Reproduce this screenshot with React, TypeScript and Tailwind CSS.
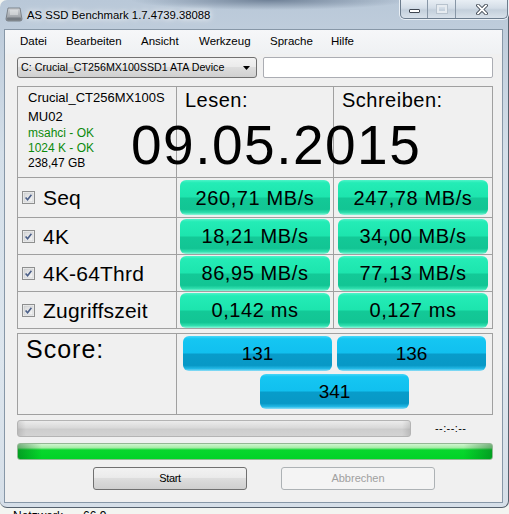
import React from "react";

type Row = {
  label: string;
  read: string;
  write: string;
  h: string;
};

const rows: Row[] = [
  { label: "Seq", read: "260,71 MB/s", write: "247,78 MB/s", h: "h-[40px]" },
  { label: "4K", read: "18,21 MB/s", write: "34,00 MB/s", h: "h-[37px]" },
  { label: "4K-64Thrd", read: "86,95 MB/s", write: "77,13 MB/s", h: "h-[37px]" },
  { label: "Zugriffszeit", read: "0,142 ms", write: "0,127 ms", h: "h-[37px]" },
];

const menu = [
  { name: "Datei", w: "w-[46px]" },
  { name: "Bearbeiten", w: "w-[75px]" },
  { name: "Ansicht", w: "w-[58px]" },
  { name: "Werkzeug", w: "w-[71px]" },
  { name: "Sprache", w: "w-[61px]" },
  { name: "Hilfe", w: "w-[40px]" },
];

function DriveIcon() {
  return (
    <svg width="18" height="15" viewBox="0 0 18 15">
      <defs>
        <linearGradient id="drv" x1="0" y1="0" x2="0" y2="1">
          <stop offset="0" stopColor="#d2d5d9" />
          <stop offset="1" stopColor="#8c9197" />
        </linearGradient>
      </defs>
      <path d="M3 1 H15 L17 12 Q17 14 15 14 H3 Q1 14 1 12 Z" fill="url(#drv)" stroke="#6d737a" strokeWidth="0.8" />
      <path d="M6 3 V8 M8 3 V8 M10 3 V8 M12 3 V8" stroke="#eef0f2" strokeWidth="0.9" />
      <rect x="2" y="10.5" width="14" height="2.5" rx="1" fill="#767c83" />
    </svg>
  );
}

function CheckBox() {
  return (
    <svg width="13" height="13" viewBox="0 0 13 13">
      <defs>
        <linearGradient id="cbg" x1="0" y1="0" x2="1" y2="1">
          <stop offset="0" stopColor="#d6d7d8" />
          <stop offset="1" stopColor="#f7f7f7" />
        </linearGradient>
      </defs>
      <rect x="0.5" y="0.5" width="12" height="12" fill="#f4f4f4" stroke="#8e8f8f" />
      <rect x="2" y="2" width="9" height="9" fill="url(#cbg)" stroke="#c4c6c8" strokeWidth="0.6" />
      <path d="M3.6 6.4 L5.6 8.7 L9.4 3.8" fill="none" stroke="#4b5f88" strokeWidth="1.6" />
    </svg>
  );
}

function TitleBar() {
  return (
    <div className="flex h-[29px] items-start">
      <div className="ml-[5px] mt-[7px]">
        <DriveIcon />
      </div>
      <div className="ml-[4px] mt-[8px] text-[11.3px] leading-[14px] text-black [text-shadow:0_0_5px_#ffffff,0_0_9px_#ffffff]">
        AS SSD Benchmark 1.7.4739.38088
      </div>
      <div className="ml-auto flex h-[19px] overflow-hidden rounded-b-[5px] border border-t-0 border-[#6c7c8d] bg-[linear-gradient(to_bottom,#e8eef4,#d3dde7_45%,#c3cfdb_55%,#d8e1ea)] shadow-[0_0_0_1px_#e9eff5]">
        <div className="flex w-[27px] items-center justify-center border-r border-[#8796a6]">
          <div className="mt-[3px] h-[4px] w-[11px] rounded-[1px] border border-[#3e4650] bg-white" />
        </div>
        <div className="flex w-[28px] items-center justify-center border-r border-[#8796a6]">
          <div className="h-[8px] w-[10px] border-2 border-[#e6ebf0] outline outline-1 outline-[#b7c2cd]" />
        </div>
        <div className="flex w-[51px] items-center justify-center">
          <svg width="12" height="11" viewBox="0 0 12 11">
            <path d="M2 1.5 L10 9.5 M10 1.5 L2 9.5" stroke="#3d4550" strokeWidth="3.6" strokeLinecap="square" />
            <path d="M2 1.5 L10 9.5 M10 1.5 L2 9.5" stroke="#ffffff" strokeWidth="1.8" strokeLinecap="square" />
          </svg>
        </div>
      </div>
    </div>
  );
}

function Value({ children }: { children: React.ReactNode }) {
  return (
    <div className="flex h-[35px] w-[150px] items-center justify-center rounded-[6px] bg-[linear-gradient(to_bottom,#4ff4c9_0%,#24ecb6_8%,#1de5ae_48%,#13c997_52%,#12c594_84%,#2fdfae_93%,#8ef6da_100%)] text-[20px] leading-none tracking-[0.6px] text-black">
      {children}
    </div>
  );
}

function Score({ children }: { children: React.ReactNode }) {
  return (
    <div className="flex h-[35px] w-[149px] items-center justify-center rounded-[6px] bg-[linear-gradient(to_bottom,#48d6f8_0%,#15c6f2_8%,#11c0ef_48%,#089cca_52%,#0898c6_84%,#22b8e5_93%,#90def7_100%)] text-[19px] leading-none text-black">
      {children}
    </div>
  );
}

export default function App() {
  return (
    <div className="h-[514px] w-[509px] overflow-hidden bg-[#f3f5f1] font-['Liberation_Sans',Arial,sans-serif]">
      <div className="flex h-[508px] w-[509px] flex-col rounded-[7px] border-b border-r border-[#56616d] bg-[radial-gradient(ellipse_140px_10px_at_270px_0px,#6f8197,transparent),linear-gradient(to_bottom,#b9c8d8,#d4dfe9_30%,#dde6ee_70%,#d6dfe8)]">
        <TitleBar />

        <div className="ml-[4px] mr-[5px] h-[474px] border border-[#8797a7] bg-[#f0f0f0]">
          {/* menu */}
          <div className="flex h-[24px] items-center bg-[linear-gradient(to_bottom,#f6f7f9,#eff1f3)] pl-[15px] text-[11.5px] text-black">
            {menu.map((m) => (
              <span key={m.name} className={m.w}>
                {m.name}
              </span>
            ))}
          </div>

          <div className="pl-[12px]">
            {/* drive select */}
            <div className="mt-[3px] flex gap-[6px]">
              <div className="flex h-[21px] w-[240px] items-center justify-between rounded-[3px] border border-[#707070] bg-[linear-gradient(to_bottom,#f3f3f3,#ebebeb_45%,#dddddd_50%,#d0d0d0)] pl-[3px] pr-[6px] text-[10.7px] text-black">
                <span>C: Crucial_CT256MX100SSD1 ATA Device</span>
                <svg width="7" height="4" viewBox="0 0 7 4">
                  <path d="M0 0 H7 L3.5 4 Z" fill="#000" />
                </svg>
              </div>
              <div className="h-[21px] w-[230px] rounded-[2px] border border-[#abadb3] bg-white" />
            </div>

            {/* results */}
            <div className="relative mt-[8px] w-[476px] border border-[#a0a0a0]">
              <div className="grid h-[90px] grid-cols-[158px_157px_159px]">
                <div className="pl-[10px] pt-[1px]">
                  <div className="text-[13px] leading-[20px] text-black">Crucial_CT256MX100S</div>
                  <div className="text-[13px] leading-[18px] text-black">MU02</div>
                  <div className="text-[12px] leading-[15px] text-[#0b8a0b]">msahci - OK</div>
                  <div className="text-[12px] leading-[15px] text-[#0b8a0b]">1024 K - OK</div>
                  <div className="text-[12px] leading-[15px] text-black">238,47 GB</div>
                </div>
                <div className="border-l border-[#a0a0a0] pl-[8px] pt-[3px] text-[20px] leading-none tracking-[0.5px] text-black">
                  Lesen:
                </div>
                <div className="border-l border-[#a0a0a0] pl-[8px] pt-[3px] text-[20px] leading-none tracking-[0.5px] text-black">
                  Schreiben:
                </div>
              </div>

              {rows.map((r) => (
                <div
                  key={r.label}
                  className={`grid grid-cols-[158px_157px_159px] border-t border-[#a0a0a0] ${r.h}`}
                >
                  <div className="flex items-center gap-[8px] pl-[4px]">
                    <CheckBox />
                    <span className="text-[21px] leading-none tracking-[0.2px] text-black">{r.label}</span>
                  </div>
                  <div className="flex items-center justify-center border-l border-[#a0a0a0]">
                    <Value>{r.read}</Value>
                  </div>
                  <div className="flex items-center justify-center border-l border-[#a0a0a0]">
                    <Value>{r.write}</Value>
                  </div>
                </div>
              ))}

              {/* date stamp over the header */}
              <div className="absolute left-[113px] top-[31px] text-[55px] leading-none tracking-[1.5px] text-black">
                09.05.2015
              </div>
            </div>

            {/* score */}
            <div className="mt-[4px] grid h-[82px] w-[476px] grid-cols-[158px_1fr] border border-[#a0a0a0]">
              <div className="pl-[8px] pt-[3px] text-[25px] leading-none tracking-[1px] text-black">Score:</div>
              <div className="flex flex-col items-center gap-[3px] border-l border-[#a0a0a0] pt-[2px]">
                <div className="flex gap-[5px]">
                  <Score>131</Score>
                  <Score>136</Score>
                </div>
                <Score>341</Score>
              </div>
            </div>

            {/* progress */}
            <div className="mt-[5px] flex items-center">
              <div className="h-[17px] w-[394px] rounded-[3px] border border-[#b4b4b4] bg-[linear-gradient(to_right,#0000001a,transparent_2%,transparent_98%,#0000001a),linear-gradient(to_bottom,#ececec,#d9d9d9_45%,#cdcdcd_55%,#d3d3d3)]" />
              <span className="ml-[24px] text-[11px] leading-none tracking-[0.4px] text-black">--:--:--</span>
            </div>
            <div className="mt-[6px] h-[17px] w-[476px] rounded-[3px] border border-[#94b894] bg-[linear-gradient(to_right,#00501566,transparent_5%,transparent_94%,#00501566),linear-gradient(to_bottom,#d2f6d2_0%,#a6eca6_25%,#08d62d_40%,#00d327_100%)]" />

            {/* buttons */}
            <div className="mt-[7px] flex gap-[34px] pl-[76px]">
              <div className="flex h-[23px] w-[154px] items-center justify-center rounded-[3px] border border-[#707070] bg-[linear-gradient(to_bottom,#f2f2f2,#ebebeb_45%,#dddddd_50%,#cfcfcf)] text-[11px] tracking-[-0.3px] text-black">
                Start
              </div>
              <div className="flex h-[23px] w-[154px] items-center justify-center rounded-[3px] border border-[#adb2b5] bg-[#f4f4f4] text-[11px] text-[#a0a0a0]">
                Abbrechen
              </div>
            </div>
          </div>
        </div>
      </div>

      <div className="flex pl-[13px] pt-[2px] text-[12px] leading-none text-black">
        <span>Netzwerk</span>
        <span className="ml-[20px]">66,9</span>
      </div>
    </div>
  );
}
